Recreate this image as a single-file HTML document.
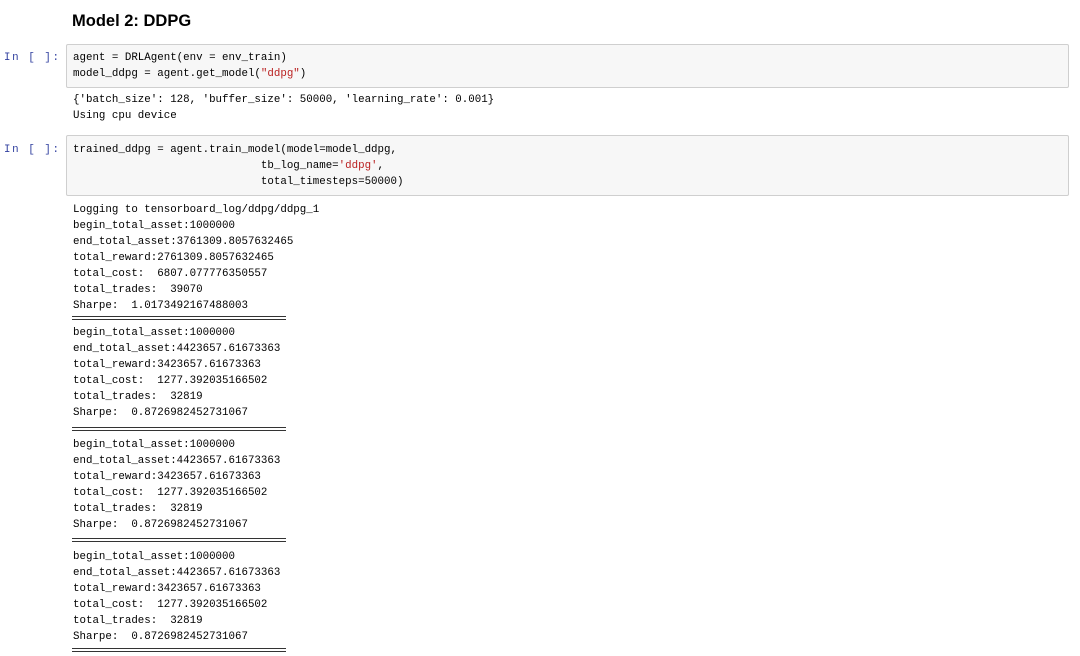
<!DOCTYPE html>
<html><head><meta charset="utf-8"><style>
body{margin:0;width:1080px;height:656px;background:#fff;position:relative;overflow:hidden;font-family:"Liberation Mono","Noto Sans CJK SC",monospace;font-size:10.8px;color:#000}
.a{position:absolute;white-space:pre;line-height:16px}
.p{color:#303f9f;left:4px;letter-spacing:1.6px}
.box{position:absolute;left:66px;width:1001px;background:#f7f7f7;border:1px solid #cfcfcf;border-radius:2px}
.s{color:#ba2121}
.sep{position:absolute;left:72px;width:214px;height:2px;border-top:1px solid #333;border-bottom:1px solid #333}
h{position:absolute;left:72px;top:12px;font:bold 16.5px "Liberation Sans",Arial,sans-serif}
</style></head><body>
<h>Model 2: DDPG</h>
<div class="box" style="top:44px;height:42px"></div>
<div class="box" style="top:135px;height:59px"></div>
<div class="a p" style="top:50px">In [ ]:</div>
<div class="a" style="left:73px;top:50px">agent = DRLAgent(env = env_train)
model_ddpg = agent.get_model(<span class="s">"ddpg"</span>)</div>
<div class="a" style="left:73px;top:92px">{'batch_size': 128, 'buffer_size': 50000, 'learning_rate': 0.001}
Using cpu device</div>
<div class="a p" style="top:142px">In [ ]:</div>
<div class="a" style="left:73px;top:142px">trained_ddpg = agent.train_model(model=model_ddpg,
                             tb_log_name=<span class="s">'ddpg'</span>,
                             total_timesteps=50000)</div>
<div class="a" style="left:73px;top:202px">Logging to tensorboard_log/ddpg/ddpg_1
begin_total_asset:1000000
end_total_asset:3761309.8057632465
total_reward:2761309.8057632465
total_cost:  6807.077776350557
total_trades:  39070
Sharpe:  1.0173492167488003</div>
<div class="sep" style="top:316px"></div>
<div class="a" style="left:73px;top:325px">begin_total_asset:1000000
end_total_asset:4423657.61673363
total_reward:3423657.61673363
total_cost:  1277.392035166502
total_trades:  32819
Sharpe:  0.8726982452731067</div>
<div class="sep" style="top:427px"></div>
<div class="a" style="left:73px;top:437px">begin_total_asset:1000000
end_total_asset:4423657.61673363
total_reward:3423657.61673363
total_cost:  1277.392035166502
total_trades:  32819
Sharpe:  0.8726982452731067</div>
<div class="sep" style="top:538px"></div>
<div class="a" style="left:73px;top:549px">begin_total_asset:1000000
end_total_asset:4423657.61673363
total_reward:3423657.61673363
total_cost:  1277.392035166502
total_trades:  32819
Sharpe:  0.8726982452731067</div>
<div class="sep" style="top:648px"></div>
</body></html>
